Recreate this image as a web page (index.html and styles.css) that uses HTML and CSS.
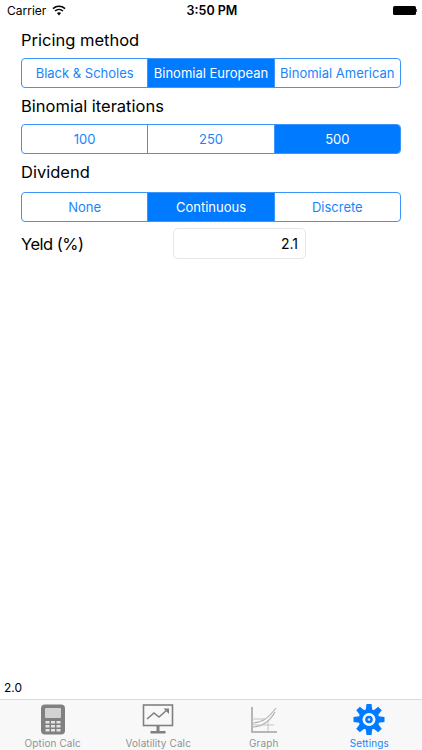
FILE: index.html
```html
<!DOCTYPE html>
<html lang="en">

<head>
  <meta charset="UTF-8" />
  <meta name="viewport" content="width=device-width, initial-scale=1.0" />
  <title>Settings</title>
  <link rel="stylesheet" href="styles.css">
</head>

<body>
  <div class="screen">
    <div class="status">
      <div class="status-left">
        <span>Carrier</span>
        <svg class="wifi" width="14" height="11" viewBox="0 0 14 11">
          <path d="M7 10.6 4.9 8.1a3.2 3.2 0 0 1 4.2 0z" fill="#000" />
          <path d="M1 3.6a9 9 0 0 1 12 0M3 6a6 6 0 0 1 8 0" fill="none" stroke="#000" stroke-width="1.5" />
        </svg>
      </div>
      <div class="status-time">3:50 PM</div>
      <div class="status-right">
        <div class="battery"></div>
        <div class="battery-tip"></div>
      </div>
    </div>

    <div class="content">
      <div class="label">Pricing method</div>
      <div class="segments">
        <div class="segment">Black &amp; Scholes</div>
        <div class="segment active">Binomial European</div>
        <div class="segment">Binomial American</div>
      </div>

      <div class="label">Binomial iterations</div>
      <div class="segments">
        <div class="segment">100</div>
        <div class="segment">250</div>
        <div class="segment active">500</div>
      </div>

      <div class="label">Dividend</div>
      <div class="segments dividend">
        <div class="segment">None</div>
        <div class="segment active">Continuous</div>
        <div class="segment">Discrete</div>
      </div>

      <div class="yield-row">
        <div class="yield-label">Yeld (%)</div>
        <div class="yield-input">2.1</div>
      </div>
    </div>

    <div class="version">2.0</div>

    <div class="tabbar">
      <div class="tab">
        <svg width="26" height="31" viewBox="0 0 26 31">
          <rect x="1" y="0.5" width="24" height="30" rx="4" fill="#808080" />
          <rect x="5" y="4" width="16" height="10" rx="1" fill="#d2d2d2" />
          <path d="M5.500 17h4v2.500h-4zM11 17h4v2.500h-4zM16.500 17h4v2.500h-4zM5.500 21h4v2.500h-4zM11 21h4v2.500h-4zM16.500 21h4v2.500h-4zM5.500 25h4v2.500h-4zM11 25h4v2.500h-4zM16.500 25h4v2.500h-4z" fill="#e4e4e4" />
        </svg>
        <span>Option Calc</span>
      </div>
      <div class="tab">
        <svg width="32" height="31" viewBox="0 0 32 31">
          <rect x="1.500" y="1" width="29" height="20.500" fill="none" stroke="#808080" stroke-width="1.600" />
          <path d="M5 15l7-6 5 4 8-7" fill="none" stroke="#808080" stroke-width="1.600" />
          <path d="M21.500 4.500h5.500v5.500z" fill="#808080" />
          <path d="M14.500 22h3v5h-3zM8.500 27h15v2.500h-15z" fill="#808080" />
        </svg>
        <span>Volatility Calc</span>
      </div>
      <div class="tab">
        <svg width="27" height="31" viewBox="0 0 27 31">
          <path d="M2 3v25h25" fill="none" stroke="#a0a0a0" stroke-width="1.500" />
          <path d="M2 23c11 0 18-6 23-15M2 19c11 0 17-6 24-15" fill="none" stroke="#b0b0b0" stroke-width="1.100" />
          <path d="M2 15h14M2 21h22M18 17v10" fill="none" stroke="#c4c4c4" stroke-width="1" />
        </svg>
        <span>Graph</span>
      </div>
      <div class="tab current">
        <svg width="32" height="31" viewBox="0 0 32 31">
          <g fill="#007aff">
            <path d="M13.500 0h5l1 8h-7z" />
            <path d="M13.500 0h5l1 8h-7z" transform="rotate(45 16 15.500)" />
            <path d="M13.500 0h5l1 8h-7z" transform="rotate(90 16 15.500)" />
            <path d="M13.500 0h5l1 8h-7z" transform="rotate(135 16 15.500)" />
            <path d="M13.500 0h5l1 8h-7z" transform="rotate(180 16 15.500)" />
            <path d="M13.500 0h5l1 8h-7z" transform="rotate(225 16 15.500)" />
            <path d="M13.500 0h5l1 8h-7z" transform="rotate(270 16 15.500)" />
            <path d="M13.500 0h5l1 8h-7z" transform="rotate(315 16 15.500)" />
            <circle cx="16" cy="15.500" r="10.500" />
          </g>
          <circle cx="16" cy="15.500" r="6.500" fill="#f8f8f8" />
          <circle cx="16" cy="15.500" r="3.800" fill="#007aff" />
          <circle cx="16" cy="15.500" r="1.300" fill="#cfe4ff" />
        </svg>
        <span>Settings</span>
      </div>
    </div>
  </div>
</body>

</html>
```

FILE: styles.css
```css
body {
  margin: 0;
  background-color: #fff;
  font-family: Inter, 'Liberation Sans', sans-serif;
  color: #000;
}

.screen {
  width: 422px;
  height: 750px;
  display: flex;
  flex-direction: column;
  overflow: hidden;
}

.status {
  height: 20px;
  padding: 0 5px 0 7px;
  display: flex;
  align-items: center;
  font-size: 12px;
}

.status-left {
  flex: 1;
  display: flex;
  align-items: center;
  gap: 6px;
}

.status-time {
  font-size: 12.500px;
  font-weight: 600;
}

.status-right {
  flex: 1;
  display: flex;
  align-items: center;
  justify-content: flex-end;
}

.battery {
  width: 23px;
  height: 9px;
  background: #000;
  border-radius: 1.500px;
}

.battery-tip {
  width: 1.500px;
  height: 3px;
  background: #555;
}

.content {
  flex: 1;
  padding: 8px 21px 0;
}

.label {
  height: 24px;
  line-height: 24px;
  font-size: 16.500px;
  margin-bottom: 6px;
}

.segments {
  height: 30px;
  box-sizing: border-box;
  display: flex;
  border: 1px solid #3d94fb;
  border-radius: 4px;
  overflow: hidden;
  margin-bottom: 6px;
}

.segments + .label {
  margin-top: 6px;
}

.segments.dividend {
  margin-top: 8px;
}

.segment {
  flex: 1;
  text-align: center;
  line-height: 28px;
  font-size: 13px;
  color: #1a84fc;
  white-space: nowrap;
  border-left: 1px solid #3d94fb;
}

.segment:first-child {
  border-left: none;
}

.segment.active {
  background: #007aff;
  color: #fff;
}

.yield-row {
  display: flex;
  align-items: center;
  height: 31px;
}

.yield-label {
  width: 152px;
  font-size: 16.500px;
  letter-spacing: -0.500px;
}

.yield-input {
  width: 133px;
  height: 31px;
  box-sizing: border-box;
  border: 1px solid #e6e6e6;
  border-radius: 5px;
  padding-right: 7px;
  text-align: right;
  line-height: 29px;
  font-size: 14px;
}

.version {
  height: 24px;
  box-sizing: border-box;
  padding: 1px 0 0 4px;
  line-height: 24px;
  font-size: 12px;
}

.tabbar {
  height: 51px;
  box-sizing: border-box;
  display: flex;
  background: #f8f8f8;
  border-top: 1px solid #d9d9d9;
}

.tab {
  flex: 1;
  display: flex;
  flex-direction: column;
  align-items: center;
  padding-top: 4px;
  font-size: 10px;
  letter-spacing: 0.100px;
  color: #929292;
}

.tab svg {
  display: block;
}

.tab span {
  margin-top: 2px;
  line-height: 12px;
}

.tab.current {
  color: #1a84fc;
}
```
